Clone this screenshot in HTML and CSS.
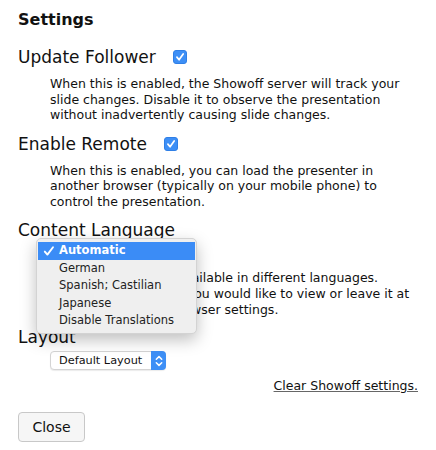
FILE: index.html
```html
<!DOCTYPE html>
<html>
<head>
<meta charset="utf-8">
<link rel="stylesheet" href="styles.css">
</head>
<body>
<div class="settings">
  <h2 class="title">Settings</h2>

  <div class="option">
    <div class="label">Update Follower <span class="check"><svg viewBox="0 0 14 14" width="14" height="14"><path d="M3.4 7.2 L5.9 10.2 L10.7 3.4" fill="none" stroke="#fff" stroke-width="2" stroke-linecap="round" stroke-linejoin="round"/></svg></span></div>
    <p class="desc">When this is enabled, the Showoff server will track your slide changes. Disable it to observe the presentation without inadvertently causing slide changes.</p>
  </div>

  <div class="option">
    <div class="label">Enable Remote <span class="check"><svg viewBox="0 0 14 14" width="14" height="14"><path d="M3.4 7.2 L5.9 10.2 L10.7 3.4" fill="none" stroke="#fff" stroke-width="2" stroke-linecap="round" stroke-linejoin="round"/></svg></span></div>
    <p class="desc">When this is enabled, you can load the presenter in another browser (typically on your mobile phone) to control the presentation.</p>
  </div>

  <div class="option lang">
    <div class="label">Content Language</div>
    <div class="select-row"><span class="select wide">Automatic</span></div>
    <p class="desc">This presentation is available in different languages. Choose the language you would like to view or leave it at the default of your browser settings.</p>
    <div class="popup">
      <div class="item active"><svg class="tick" viewBox="0 0 12 12" width="12" height="12"><path d="M1.8 6.6 L4.4 9.6 L10 2.2" fill="none" stroke="#fff" stroke-width="1.9" stroke-linecap="round" stroke-linejoin="round"/></svg>Automatic</div>
      <div class="item">German</div>
      <div class="item">Spanish; Castilian</div>
      <div class="item">Japanese</div>
      <div class="item">Disable Translations</div>
    </div>
  </div>

  <div class="option">
    <div class="label">Layout</div>
    <div class="select-row layout-row"><span class="select">Default Layout<span class="stepper"><svg viewBox="0 0 14 18" width="14" height="18"><path d="M4.3 7.3 L7 4.6 L9.7 7.3 M4.3 10.7 L7 13.4 L9.7 10.7" fill="none" stroke="#fff" stroke-width="1.5" stroke-linecap="round" stroke-linejoin="round"/></svg></span></span></div>
  </div>

  <div class="clear-row"><a class="clear" href="#">Clear Showoff settings.</a></div>

  <button class="close">Close</button>
</div>
</body>
</html>
```

FILE: styles.css
```css
html, body {
  margin: 0;
  padding: 0;
  background: #fff;
}
body {
  font-family: "DejaVu Sans", "Liberation Sans", sans-serif;
  color: #111;
}
.settings {
  padding: 10px 18px 0 18px;
  width: 400px;
  position: relative;
}
.title {
  margin: 0 0 16px 0;
  font-size: 16px;
  font-weight: bold;
  line-height: 20px;
}
.option {
  position: relative;
}
.label {
  font-size: 17px;
  line-height: 22px;
  display: flex;
  align-items: center;
}
.check {
  display: inline-flex;
  width: 14px;
  height: 14px;
  margin-left: 17px;
  background: #3d8ff6;
  border-radius: 3px;
  border: 1px solid #2f7fe6;
  box-sizing: border-box;
  align-items: center;
  justify-content: center;
}
.check svg { display: block; }
.desc {
  margin: 8px 0 10px 32px;
  font-size: 12.5px;
  line-height: 15.5px;
}
.select-row {
  margin-left: 32px;
  height: 19px;
}
.layout-row { margin-top: 1px; }
.select {
  display: inline-flex;
  align-items: center;
  height: 19px;
  box-sizing: border-box;
  font-size: 11.3px;
  padding-left: 8px;
  border: 1px solid #d4d4d4;
  border-radius: 4px;
  background: #fff;
  box-shadow: 0 1px 1px rgba(0,0,0,0.08);
  position: relative;
  width: 116px;
  color: #111;
}
.select.wide { width: 147px; }
.stepper {
  position: absolute;
  right: -1px;
  top: -1px;
  width: 15px;
  height: 19px;
  background: #3d8ff6;
  border-radius: 0 4px 4px 0;
  display: flex;
  align-items: center;
  justify-content: center;
}
.stepper svg { display: block; }
.lang .desc {
  margin-top: 10px;
  margin-bottom: 8px;
  line-height: 16px;
}
.popup {
  position: absolute;
  left: 18px;
  top: 19px;
  width: 161px;
  box-sizing: border-box;
  padding: 3px 0 3px 0;
  background: #efefef;
  border: 1px solid #d3d3d3;
  border-radius: 5px;
  box-shadow: 0 6px 16px rgba(0,0,0,0.25);
  font-size: 11.5px;
  z-index: 5;
}
.item {
  height: 17.5px;
  line-height: 17.5px;
  padding-left: 22px;
  color: #222;
  position: relative;
}
.item.active {
  background: #3b8cf6;
  color: #fff;
  font-weight: bold;
  margin: 0 1px;
  padding-left: 21px;
}
.tick {
  position: absolute;
  left: 5px;
  top: 3px;
  display: block;
}
.clear-row {
  display: flex;
  justify-content: flex-end;
  margin-top: 10px;
  line-height: 15px;
}
.clear {
  font-size: 12.5px;
  color: #111;
  text-decoration: underline;
  text-decoration-color: #666;
}
.close {
  margin-top: 19px;
  font-family: "DejaVu Sans", sans-serif;
  font-size: 14px;
  width: 67px;
  height: 30px;
  background: #f6f6f6;
  border: 1px solid #c8c8c8;
  border-radius: 4px;
  color: #111;
  padding: 0;
}
```
